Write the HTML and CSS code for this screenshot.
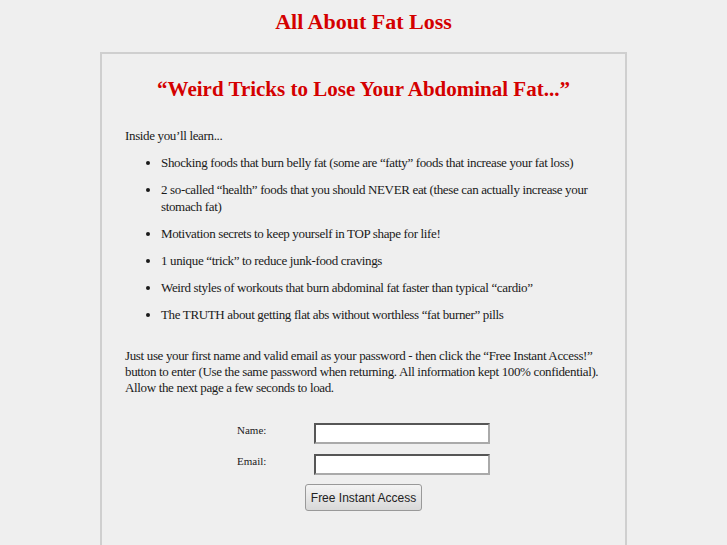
FILE: index.html
```html
<!DOCTYPE html>
<html>
<head>
<meta charset="utf-8">
<link rel="stylesheet" href="styles.css">
</head>
<body>
<h1 class="site-title">All About Fat Loss</h1>
<div class="box">
  <h2 class="headline">“Weird Tricks to Lose Your Abdominal Fat...”</h2>
  <p class="intro">Inside you’ll learn...</p>
  <ul class="points">
    <li>Shocking foods that burn belly fat (some are “fatty” foods that increase your fat loss)</li>
    <li>2 so-called “health” foods that you should NEVER eat (these can actually increase your stomach fat)</li>
    <li>Motivation secrets to keep yourself in TOP shape for life!</li>
    <li>1 unique “trick” to reduce junk-food cravings</li>
    <li>Weird styles of workouts that burn abdominal fat faster than typical “cardio”</li>
    <li>The TRUTH about getting flat abs without worthless “fat burner” pills</li>
  </ul>
  <p class="instructions">Just use your first name and valid email as your password - then click the “Free Instant Access!” button to enter (Use the same password when returning. All information kept 100% confidential). Allow the next page a few seconds to load.</p>
  <form class="signup">
    <div class="row"><label class="lbl">Name:</label><input class="field" type="text"></div>
    <div class="row"><label class="lbl">Email:</label><input class="field" type="text"></div>
    <div class="btn-row"><button class="btn" type="button">Free Instant Access</button></div>
  </form>
</div>
</body>
</html>
```
FILE: styles.css
```css
html, body { margin: 0; padding: 0; }
body {
  background: #efefef;
  font-family: "Liberation Serif", "Times New Roman", serif;
  color: #1a1a1a;
}
.site-title {
  margin: 0;
  padding-top: 10px;
  height: 52px;
  box-sizing: border-box;
  text-align: center;
  color: #d40000;
  font-size: 22px;
  line-height: 24px;
  font-weight: bold;
}
.box {
  width: 477px;
  margin: 0 auto;
  border: 2px solid #cfcfcf;
  padding: 22px 23px 40px;
  height: 600px;
}
.headline {
  margin: 0 0 26px;
  text-align: center;
  color: #d40000;
  font-size: 21px;
  line-height: 26px;
  font-weight: bold;
}
.intro, .points, .instructions { letter-spacing: -0.35px; }
.intro { margin: 0 0 10px; font-size: 13px; line-height: 16px; }
.points { margin: 0 0 25px; padding-left: 36px; font-size: 13px; line-height: 17px; }
.points li { margin-bottom: 10px; }
.instructions { margin: 0 0 27px; font-size: 13px; line-height: 16px; }
.signup { display: flex; flex-direction: column; align-items: center; gap: 10px; }
.row { display: flex; align-items: flex-start; width: 253px; }
.lbl { width: 77px; font-size: 11px; line-height: 13px; padding-top: 1px; }
.field {
  width: 176px; height: 21px; box-sizing: border-box;
  border: 2px inset #aaa; background: #fff; margin: 0; padding: 0 2px;
}
.btn-row { display: flex; justify-content: center; margin-top: -1px; }
.btn {
  height: 27px; padding: 0 5px;
  font-family: "Liberation Sans", Arial, sans-serif; font-size: 12px; color: #222;
  border: 1px solid #999; border-radius: 3px;
  background: linear-gradient(#f4f4f4, #d8d8d8);
}
```
